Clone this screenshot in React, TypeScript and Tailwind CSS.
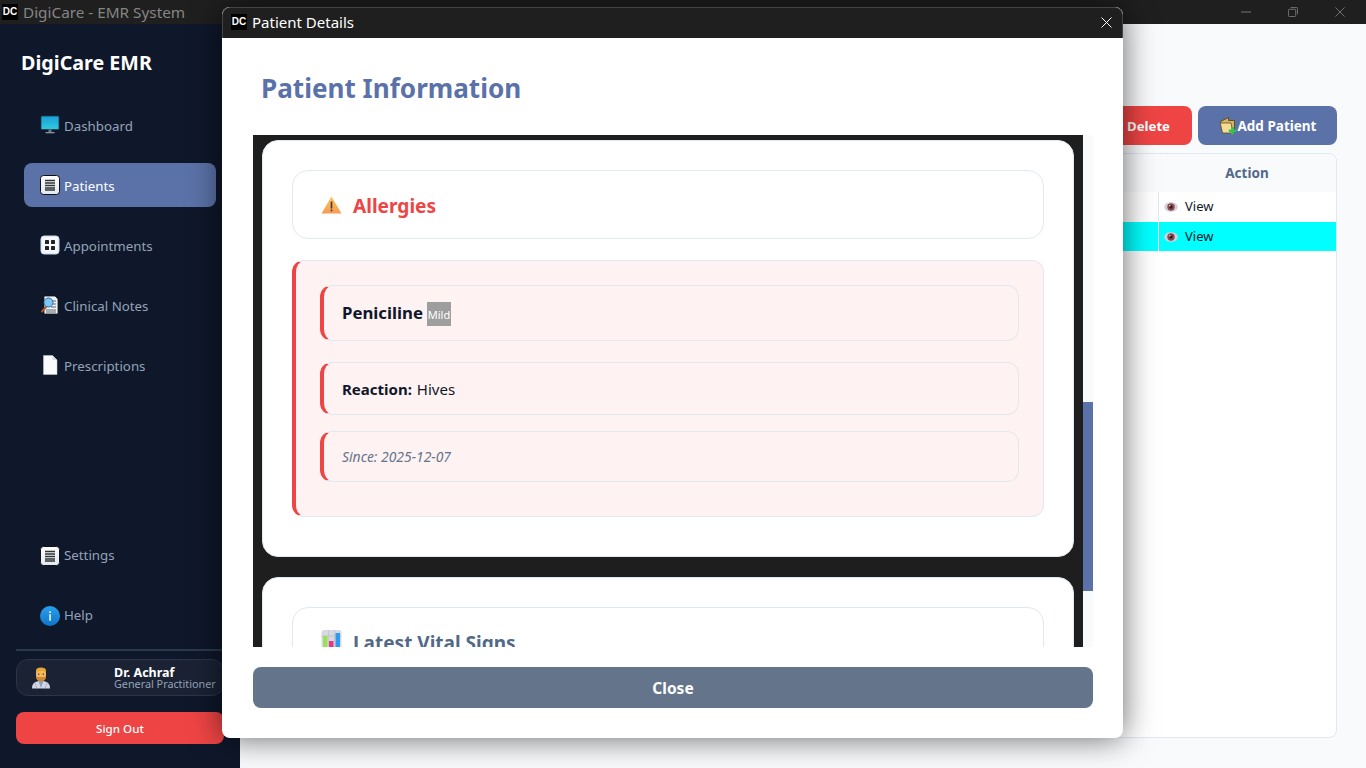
import React from "react";

const ListIcon = ({ id }: { id: string }) => (
  <svg width="20" height="20" viewBox="0 0 20 20">
    <defs>
      <linearGradient id={id} x1="0" y1="0" x2="0" y2="1">
        <stop offset="0" stopColor="#ffffff" />
        <stop offset="1" stopColor="#dfe7f2" />
      </linearGradient>
    </defs>
    <rect x="0.5" y="0.5" width="19" height="19" rx="3" fill={`url(#${id})`} stroke="#111" />
    <path d="M5 5.5h10M5 8h10M5 10.500h10M5 13h10M5 15h10" stroke="#333" strokeWidth="1.4" />
  </svg>
);

const GridIcon = () => (
  <svg width="20" height="20" viewBox="0 0 20 20">
    <rect x="1" y="1" width="18" height="18" rx="3" fill="#f4f7fb" stroke="#c9d6e6" strokeWidth="1" />
    <rect x="5" y="5" width="4" height="4" rx="0.6" fill="#222" />
    <rect x="11" y="5" width="4" height="4" rx="0.6" fill="#222" />
    <rect x="5" y="11" width="4" height="4" rx="0.6" fill="#222" />
    <rect x="11" y="11" width="4" height="4" rx="0.6" fill="#222" />
  </svg>
);

const MonitorIcon = () => (
  <svg width="20" height="20" viewBox="0 0 20 20">
    <defs>
      <linearGradient id="mon" x1="0" y1="0" x2="0" y2="1">
        <stop offset="0" stopColor="#1a9fd8" />
        <stop offset="1" stopColor="#2fcbdc" />
      </linearGradient>
    </defs>
    <rect x="1" y="1" width="18" height="13.500" rx="1" fill="url(#mon)" stroke="#22384f" strokeWidth="0.8" />
    <rect x="8.500" y="14.500" width="3" height="2.500" fill="#6b7a8b" />
    <rect x="5.500" y="17" width="9" height="1.300" fill="#8795a6" />
  </svg>
);

const NotesIcon = () => (
  <svg width="20" height="20" viewBox="0 0 20 20">
    <path d="M4 1h11l3 3v15H4z" fill="#eef2f7" stroke="#111" strokeWidth="0.8" />
    <path d="M10 6h6M11 9h5M11 12h5M6 15h10M6 17h10" stroke="#4b5563" strokeWidth="0.9" />
    <path d="M6 12l-4 4.500" stroke="#a8552c" strokeWidth="2" strokeLinecap="round" />
    <circle cx="8.500" cy="7.500" r="4.500" fill="#7cc6f5" stroke="#2d6ea5" strokeWidth="1" />
  </svg>
);

const PageIcon = () => (
  <svg width="20" height="20" viewBox="0 0 20 20">
    <path d="M3.500 0.500h9l4.500 4.500V19.500H3.500z" fill="#f8fafc" stroke="#c5cdd8" strokeWidth="0.5" />
    <path d="M12.500 0.500V5H17z" fill="#d5dae2" />
  </svg>
);

const InfoIcon = () => (
  <svg width="20" height="20" viewBox="0 0 20 20">
    <defs>
      <linearGradient id="inf" x1="0" y1="0" x2="0" y2="1">
        <stop offset="0" stopColor="#2aa0ea" />
        <stop offset="1" stopColor="#0f74c8" />
      </linearGradient>
    </defs>
    <circle cx="10" cy="10" r="10" fill="url(#inf)" />
    <rect x="9.200" y="8.200" width="1.700" height="6.500" fill="#dff1ff" />
    <rect x="9.200" y="5.300" width="1.700" height="1.700" fill="#dff1ff" />
  </svg>
);

const DoctorIcon = () => (
  <svg width="20" height="22" viewBox="0 0 20 22">
    <path d="M1 21.500c0-5.500 3-7.500 9-7.500s9 2 9 7.500z" fill="#d4d6e4" />
    <path d="M7.500 14L10 21l2.500-7z" fill="#8aa0c4" />
    <path d="M4 16l2 5.500M16 16l-2 5.500" stroke="#9fa6bb" strokeWidth="0.8" />
    <rect x="5" y="2.500" width="10" height="9.500" rx="3.500" fill="#f2b861" />
    <path d="M5 5V3.500C5 1.500 7 .5 10 .5s5 1 5 3V5c-2-1.500-8-1.500-10 0z" fill="#e6a832" />
    <path d="M5 8c.5 1.500 1 2 2 2h6c1 0 1.500-.5 2-2v2.500c-.5 2.500-2.500 4-5 4s-4.500-1.500-5-4z" fill="#cf8a32" />
    <rect x="7" y="6.500" width="1.300" height="1.300" fill="#5a3a1a" />
    <rect x="11.700" y="6.500" width="1.300" height="1.300" fill="#5a3a1a" />
  </svg>
);

const WarnIcon = () => (
  <svg width="21" height="18" viewBox="0 0 20 18">
    <defs>
      <linearGradient id="wrn" x1="0" y1="0" x2="0" y2="1">
        <stop offset="0" stopColor="#fcc75a" />
        <stop offset="1" stopColor="#f79a55" />
      </linearGradient>
    </defs>
    <path d="M10 0.500L20 17.500H0z" fill="url(#wrn)" />
    <rect x="9.200" y="5.500" width="1.600" height="7" fill="#3b3b3b" />
    <rect x="9.200" y="13.500" width="1.600" height="1.800" fill="#3b3b3b" />
  </svg>
);

const ChartIcon = () => (
  <svg width="21" height="24" viewBox="0 0 20 24">
    <rect x="0" y="0" width="20" height="24" rx="3" fill="#d8d8e2" />
    <path d="M7 0v24M13 0v24M0 6h20" stroke="#bdbdca" strokeWidth="0.6" />
    <rect x="1.500" y="6" width="4.500" height="18" fill="#9be05a" />
    <rect x="7.500" y="11" width="4.500" height="13" fill="#e8367f" />
    <rect x="14" y="3" width="4.500" height="21" fill="#2f9bf0" />
  </svg>
);

const FolderPlusIcon = () => (
  <svg width="18" height="18" viewBox="0 0 17 18">
    <path d="M1 4.500L9 0.500v3h6V15H3z" fill="#d9b45a" stroke="#4d3f1d" strokeWidth="0.8" />
    <path d="M0.700 6h10.800l2 10H3z" fill="#f5dc91" stroke="#4d3f1d" strokeWidth="0.7" />
    <path d="M13 10v7.500M9.300 13.800h7.500" stroke="#35c253" strokeWidth="2.600" />
  </svg>
);

const EyeIcon = () => (
  <svg width="14" height="12" viewBox="0 0 14 12">
    <ellipse cx="7" cy="6" rx="6.800" ry="4.800" fill="#d6cfdc" />
    <circle cx="7" cy="6" r="3.700" fill="#8a4a50" />
    <circle cx="7" cy="6" r="1.700" fill="#3a1a1f" />
    <circle cx="5.800" cy="4.800" r="0.700" fill="#f2e6e8" />
  </svg>
);

const DC = () => (
  <span className="flex h-4 w-4 shrink-0 items-center justify-center bg-black text-[10px] font-bold leading-none text-white font-['Liberation_Sans',sans-serif]">
    DC
  </span>
);

const NavItem = ({
  icon,
  label,
  active = false,
  lower = false,
}: {
  icon: React.ReactNode;
  label: string;
  active?: boolean;
  lower?: boolean;
}) => (
  <div
    className={`flex h-11 items-center gap-1 rounded-lg pl-4 text-[13.300px] ${
      active ? "bg-[#5b72a8] text-white" : "text-[#94a3b8]"
    }`}
  >
    <span className="flex h-5 w-5 items-center justify-center">{icon}</span>
    <span className={lower ? "pt-1" : ""}>{label}</span>
  </div>
);

export default function App() {
  return (
    <div className="relative flex h-screen w-[1366px] flex-col overflow-hidden bg-[#f8fafc] font-['Noto_Sans',sans-serif]">
      {/* window title bar */}
      <div className="flex h-6 shrink-0 items-center bg-[#1f1f1f] pl-[2px] text-[15.300px] text-[#858585]">
        <DC />
        <span className="ml-[5px]">DigiCare - EMR System</span>
        <div className="ml-auto flex items-center gap-[37px] pr-[21px]">
          <svg width="10" height="2" viewBox="0 0 10 2"><path d="M0 1h10" stroke="#777" /></svg>
          <svg width="10" height="10" viewBox="0 0 11 11" fill="none" stroke="#777">
            <rect x="0.500" y="2.500" width="8" height="8" rx="1" />
            <path d="M3 .5h6.500a1 1 0 0 1 1 1V8" />
          </svg>
          <svg width="10" height="10" viewBox="0 0 11 11" stroke="#777"><path d="M0.500 0.500l10 10M10.500 0.500l-10 10" /></svg>
        </div>
      </div>

      <div className="flex min-h-0 flex-1">
        {/* sidebar */}
        <aside className="flex w-[240px] shrink-0 flex-col bg-[#0f172a] px-4 pb-6">
          <div className="ml-[5px] mt-[23px] text-[19.700px] font-bold leading-8 text-white">DigiCare EMR</div>
          <nav className="mx-2 mt-6 flex flex-col gap-4">
            <NavItem lower icon={<MonitorIcon />} label="Dashboard" />
            <NavItem lower icon={<ListIcon id="lg1" />} label="Patients" active />
            <NavItem lower icon={<GridIcon />} label="Appointments" />
            <NavItem lower icon={<NotesIcon />} label="Clinical Notes" />
            <NavItem lower icon={<PageIcon />} label="Prescriptions" />
          </nav>
          <nav className="mx-2 mt-auto flex flex-col gap-4">
            <NavItem icon={<ListIcon id="lg2" />} label="Settings" />
            <NavItem icon={<InfoIcon />} label="Help" />
          </nav>
          <div className="mt-[11px] h-[2px] bg-[#2b3a4e]" />
          <div className="mt-2 flex h-[37px] items-center rounded-xl border border-[#2c3648] bg-[#1a2234] pl-[14px]">
            <DoctorIcon />
            <div className="ml-[63px] flex flex-col pt-px text-[10.800px] leading-[11px]">
              <span className="text-[12.500px] font-bold text-white">Dr. Achraf</span>
              <span className="text-[#94a3b8]">General Practitioner</span>
            </div>
          </div>
          <div className="mt-4 flex h-8 items-center justify-center rounded-lg bg-[#ef4444] pt-[2px] text-[11.600px] font-medium text-white">
            Sign Out
          </div>
        </aside>

        {/* main */}
        <main className="flex min-w-0 flex-1 flex-col pb-[30px] pl-[30px] pr-[29px] pt-[82px]">
          <div className="flex justify-end gap-[6px]">
            <div className="flex h-[39px] items-center gap-1 rounded-lg bg-[#ef4444] pl-5 pr-[22px] pt-[2px] text-[13.200px] font-bold text-white">
              <svg width="16" height="16" viewBox="0 0 16 16"><rect x="3" y="3" width="10" height="12" fill="#c7d2e0" /></svg>
              Delete
            </div>
            <div className="flex h-[39px] w-[139px] items-center justify-center gap-px rounded-lg bg-[#5b72a8] text-[13.500px] font-bold text-white">
              <FolderPlusIcon />
              <span className="pt-[2px]">Add Patient</span>
            </div>
          </div>
          <div className="mt-2 flex-1 overflow-hidden rounded-lg border border-[#e2e8f0] bg-white text-[13px] text-[#0f172a]">
            <div className="flex h-[38px] bg-[#f8fafc] text-[13.500px] font-bold text-[#526a88]">
              <div className="flex-1" />
              <div className="flex w-[178px] items-center justify-center">Action</div>
            </div>
            <div className="flex h-[30px]">
              <div className="flex-1" />
              <div className="flex w-[178px] items-center gap-[7px] border-l border-[#e2e8f0] pl-[5px]">
                <EyeIcon /> View
              </div>
            </div>
            <div className="flex h-[29px] bg-[#00ffff]">
              <div className="flex-1" />
              <div className="flex w-[178px] items-center gap-[7px] border-l border-white pl-[5px] pt-px">
                <EyeIcon /> View
              </div>
            </div>
          </div>
        </main>
      </div>

      {/* modal dialog window */}
      <div className="absolute left-[222px] top-[7px] flex h-[731px] w-[901px] flex-col overflow-hidden rounded-lg bg-white shadow-[0_0_32px_rgba(0,0,0,0.6)]">
        <div className="flex h-[31px] shrink-0 items-center rounded-t-lg border-l border-r border-t border-[#444] bg-[#1f1f1f] pb-[2px] pl-2 pr-[10px] text-[15px] text-white">
          <DC />
          <span className="ml-[5px]">Patient Details</span>
          <svg className="ml-auto" width="11" height="11" viewBox="0 0 11 11" stroke="#fff"><path d="M0.500 0.500l10 10M10.500 0.500l-10 10" /></svg>
        </div>
        <div className="flex min-h-0 flex-1 flex-col pb-[30px] pl-[31px] pr-[30px]">
          <h1 className="mt-8 h-[37px] pl-2 text-[26.100px] font-bold leading-[37px] text-[#5b72a8]">Patient Information</h1>
          <div className="mt-7 flex h-[512px] shrink-0">
            {/* scroll viewport */}
            <div className="flex-1 overflow-hidden bg-[#1e1e1e] pl-[9px] pr-[9px] pt-[5px]">
              <section className="h-[417px] rounded-2xl border border-[#e2e8f0] bg-white px-[29px] pt-[29px]">
                <div className="flex h-[69px] items-center gap-[11px] rounded-2xl border border-[#e2e8f0] bg-white pl-[28px]">
                  <WarnIcon />
                  <h2 className="pt-1 text-[19.100px] font-bold text-[#ef4444]">Allergies</h2>
                </div>
                <div className="mt-[21px] h-[257px] rounded-xl border border-[#e2e8f0] border-l-4 border-l-[#ef4444] bg-[#fef2f2] pl-[24px] pr-6 pt-6">
                  <div className="flex h-[56px] items-center gap-1 rounded-xl border border-[#e2e8f0] border-l-4 border-l-[#ef4444] pl-[18px]">
                    <span className="text-[16.800px] font-bold text-[#0f172a]">Peniciline</span>
                    <span className="mt-[2px] flex h-6 w-6 items-center justify-center whitespace-nowrap bg-[#9e9e9e] pt-[2px] text-[11px] text-white">Mild</span>
                  </div>
                  <div className="mt-[21px] flex h-[53px] items-center gap-[5px] rounded-xl border border-[#e2e8f0] border-l-4 border-l-[#ef4444] pl-[18px] pt-[2px] text-[15px] text-[#0f172a]">
                    <strong>Reaction:</strong> Hives
                  </div>
                  <div className="mt-4 flex h-[51px] items-center rounded-xl border border-[#e2e8f0] border-l-4 border-l-[#ef4444] pl-[18px] pt-[2px] text-[13.900px] italic text-[#64748b]">
                    Since: 2025-12-07
                  </div>
                </div>
              </section>
              <section className="mt-5 h-[300px] rounded-2xl border border-[#e2e8f0] bg-white px-[29px] pt-[29px]">
                <div className="flex h-[69px] items-center gap-[11px] rounded-2xl border border-[#e2e8f0] bg-white pl-[28px]">
                  <ChartIcon />
                  <h2 className="pt-1 text-[19px] font-bold text-[#526a88]">Latest Vital Signs</h2>
                </div>
              </section>
            </div>
            {/* scrollbar */}
            <div className="flex w-[10px] flex-col bg-[#f8fafc] pt-[267px]">
              <div className="h-[189px] bg-[#5b72a8]" />
            </div>
          </div>
          <div className="mt-5 flex h-[41px] shrink-0 items-center justify-center rounded-lg bg-[#64748b] pt-[2px] text-[15.500px] font-bold text-white">
            Close
          </div>
        </div>
      </div>
    </div>
  );
}
